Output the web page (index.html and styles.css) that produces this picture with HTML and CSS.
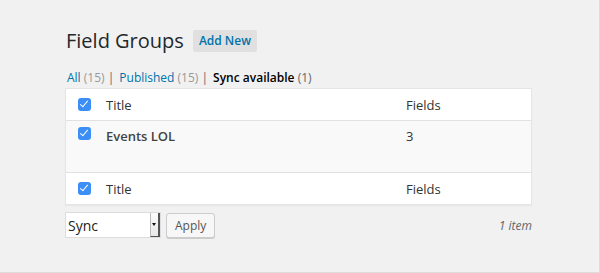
FILE: index.html
```html
<!DOCTYPE html>
<html>
<head lang="en">
    <meta charset="UTF-8">
    <title>Field Groups</title>
    <link rel="stylesheet" href="styles.css">
</head>
<body>
    <div id="screen">
        <div id="wrap">
            <div id="title-row">
                <h1>Field Groups</h1>
                <a class="add-new">Add New</a>
            </div>

            <ul class="subsubsub">
                <li><a>All <span class="count">(15)</span></a> |</li>
                <li><a>Published <span class="count">(15)</span></a> |</li>
                <li><a class="current">Sync available <span class="count">(1)</span></a></li>
            </ul>

            <div class="list-table">
                <div class="row head">
                    <div class="cb"><span class="check"></span></div>
                    <div class="col-title">Title</div>
                    <div class="col-fields">Fields</div>
                </div>
                <div class="row item">
                    <div class="cb"><span class="check"></span></div>
                    <div class="col-title strong">Events LOL</div>
                    <div class="col-fields">3</div>
                </div>
                <div class="row foot">
                    <div class="cb"><span class="check"></span></div>
                    <div class="col-title">Title</div>
                    <div class="col-fields">Fields</div>
                </div>
            </div>

            <div class="tablenav">
                <div class="select">
                    <span>Sync</span>
                    <span class="arrow"></span>
                </div>
                <div class="button">Apply</div>
                <div class="num">1 item</div>
            </div>
        </div>
    </div>
</body>
</html>
```

FILE: styles.css
```css
html, body {
    margin: 0;
    padding: 0;
}
body {
    background-color: #f1f1f1;
    font-family: "Open Sans", "Liberation Sans", sans-serif;
    font-size: 13px;
    color: #444;
}
#screen {
    width: 599px;
    height: 272px;
    border-right: 1px solid #dcdcdc;
    border-bottom: 1px solid #dcdcdc;
    overflow: hidden;
}
#wrap {
    width: 467px;
    padding: 27px 0 0 65px;
}
#title-row {
    display: flex;
    align-items: center;
    height: 28px;
}
h1 {
    margin: 0;
    font-size: 20px;
    font-weight: 400;
    color: #23282d;
    line-height: 28px;
    padding-left: 1px;
}
.add-new {
    margin-left: 9px;
    background-color: #e0e0e0;
    color: #0073aa;
    font-weight: 600;
    font-size: 12px;
    padding: 0 6px;
    height: 22px;
    line-height: 22px;
    border-radius: 2px;
}
.subsubsub {
    list-style: none;
    margin: 13px 0 0 0;
    padding: 0 0 0 2px;
    display: flex;
    height: 20px;
    line-height: 20px;
    font-size: 12px;
    color: #666;
}
.subsubsub li {
    margin-right: 5px;
    white-space: pre;
}
.subsubsub a {
    color: #0073aa;
}
.subsubsub a.current {
    color: #000;
    font-weight: 600;
}
.count {
    color: #999;
    font-weight: 400;
}
.subsubsub a.current .count {
    color: #666;
}
.list-table {
    margin-top: 0;
    background-color: #fff;
    border: 1px solid #e5e5e5;
    box-shadow: 0 1px 1px rgba(0, 0, 0, 0.04);
}
.row {
    display: flex;
    align-items: flex-start;
    color: #333;
}
.head {
    height: 31px;
    border-bottom: 1px solid #e1e1e1;
    align-items: center;
}
.item {
    height: 51px;
    background-color: #f9f9f9;
}
.foot {
    height: 31px;
    border-top: 1px solid #e1e1e1;
    align-items: center;
}
.cb {
    width: 40px;
    padding-left: 12px;
    box-sizing: border-box;
    display: flex;
    align-items: center;
}
.item .cb, .item .col-title, .item .col-fields {
    padding-top: 6px;
    line-height: 19px;
}
.check {
    width: 13px;
    height: 13px;
    border-radius: 3px;
    background-color: #3b8ef5;
    position: relative;
    display: inline-block;
}
.check:after {
    content: "";
    position: absolute;
    left: 4px;
    top: 1px;
    width: 3px;
    height: 7px;
    border-right: 1.5px solid #fff;
    border-bottom: 1.5px solid #fff;
    transform: rotate(40deg);
}
.col-title {
    width: 300px;
    font-size: 13px;
}
.strong {
    font-weight: 600;
    color: #444;
}
.col-fields {
    font-size: 13px;
}
.tablenav {
    display: flex;
    align-items: center;
    margin-top: 6px;
    height: 28px;
}
.select {
    width: 96px;
    height: 26px;
    background-color: #fff;
    border: 1px solid #ddd;
    box-sizing: border-box;
    display: flex;
    justify-content: space-between;
    align-items: center;
    padding-left: 2px;
    font-size: 14px;
    color: #222;
}
.arrow {
    width: 10px;
    height: 24px;
    border-left: 1px solid #bbb;
    border-right: 2px solid #555;
    border-bottom: 1px solid #555;
    box-sizing: border-box;
    background: linear-gradient(#fdfdfd, #e8e8e8);
    position: relative;
}
.arrow:after {
    content: "";
    position: absolute;
    left: 1px;
    top: 10px;
    border-left: 2.5px solid transparent;
    border-right: 2.5px solid transparent;
    border-top: 3px solid #111;
}
.button {
    margin-left: 5px;
    height: 25px;
    line-height: 23px;
    padding: 0 8px;
    box-sizing: border-box;
    border: 1px solid #ccc;
    border-radius: 3px;
    background-color: #f7f7f7;
    box-shadow: 0 1px 0 #ccc;
    font-size: 12px;
    color: #555;
}
.num {
    margin-left: auto;
    font-style: italic;
    color: #666;
    font-size: 12px;
}
```
